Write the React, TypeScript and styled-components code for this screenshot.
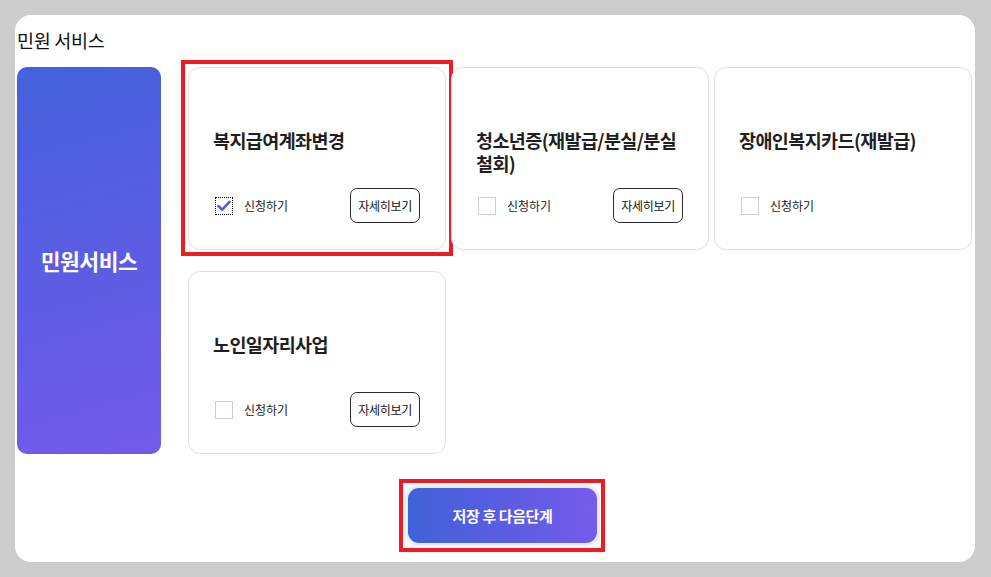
import styled, { createGlobalStyle } from 'styled-components';

interface Service {
  title: string;
  checked?: boolean;
  detail?: boolean;
  highlighted?: boolean;
}

const services: Service[] = [
  { title: '복지급여계좌변경', checked: true, detail: true, highlighted: true },
  { title: '청소년증(재발급/분실/분실철회)', detail: true },
  { title: '장애인복지카드(재발급)' },
  { title: '노인일자리사업', detail: true },
];

export default function App(): JSX.Element {
  return (
    <>
      <GlobalStyle />
      <Panel>
        <PageTitle>민원 서비스</PageTitle>
        <Body>
          <SideBox>민원서비스</SideBox>
          <CardGrid>
            {services.map((s) => (
              <Card key={s.title} highlighted={s.highlighted}>
                <CardTitle>{s.title}</CardTitle>
                <CardFooter>
                  <CheckLabel>
                    <CheckBox checked={s.checked}>
                      {s.checked && (
                        <svg width="14" height="12" viewBox="0 0 14 12">
                          <path
                            d="M1.5 6.2 L5.2 9.6 L12.5 1.8"
                            fill="none"
                            stroke="#4b5fe0"
                            strokeWidth="2.6"
                            strokeLinecap="round"
                            strokeLinejoin="round"
                          />
                        </svg>
                      )}
                    </CheckBox>
                    신청하기
                  </CheckLabel>
                  {s.detail && <DetailButton>자세히보기</DetailButton>}
                </CardFooter>
              </Card>
            ))}
          </CardGrid>
        </Body>
        <Footer>
          <NextButton>저장 후 다음단계</NextButton>
        </Footer>
      </Panel>
    </>
  );
}

const GlobalStyle = createGlobalStyle`
  html, body {
    margin: 0;
    background: #cccccc;
  }
  body {
    padding: 15px;
    font-family: "Noto Sans CJK KR", "Noto Sans", sans-serif;
    color: #1d1d1d;
  }
`;
const Panel = styled.div`
  box-sizing: border-box;
  width: 960px;
  height: 547px;
  background: #ffffff;
  border-radius: 16px;
  padding: 13px 3px 0 2px;
`;
const PageTitle = styled.h2`
  margin: 0;
  font-size: 18.5px;
  font-weight: 400;
  line-height: 24px;
  color: #111;
  letter-spacing: -0.3px;
`;
const Body = styled.div`
  display: flex;
  gap: 27px;
  margin-top: 15px;
`;
const SideBox = styled.div`
  flex: 0 0 144px;
  display: flex;
  align-items: center;
  justify-content: center;
  border-radius: 10px;
  background: linear-gradient(165deg, #4461dc 0%, #5b5de3 50%, #745aeb 100%);
  color: #fff;
  font-size: 21.5px;
  font-weight: 700;
  letter-spacing: -0.5px;
`;
const CardGrid = styled.div`
  flex: 1;
  display: grid;
  grid-template-columns: repeat(3, 1fr);
  grid-auto-rows: 183px;
  column-gap: 5px;
  row-gap: 21px;
`;
const Card = styled.div<{ highlighted?: boolean }>`
  position: relative;
  box-sizing: border-box;
  display: flex;
  flex-direction: column;
  padding: 61px 25px 26px 24px;
  border: 1px solid #dedfe3;
  border-radius: 12px;
  background: #fff;

  &::after {
    content: '';
    display: ${({ highlighted }) => (highlighted ? 'block' : 'none')};
    position: absolute;
    inset: -8px -8px -7px -8px;
    border: 4px solid #ed1c24;
  }
`;
const CardTitle = styled.h3`
  margin: 0;
  font-size: 18.5px;
  font-weight: 700;
  line-height: 23px;
  color: #1f1f1f;
  letter-spacing: -0.6px;
  word-break: break-all;
`;
const CardFooter = styled.div`
  margin-top: auto;
  min-height: 35px;
  display: flex;
  align-items: center;
  justify-content: space-between;
`;
const CheckLabel = styled.label`
  display: flex;
  align-items: center;
  gap: 11px;
  font-size: 12px;
  color: #222;
  padding-left: 2px;
`;
const CheckBox = styled.span<{ checked?: boolean }>`
  box-sizing: border-box;
  width: 18px;
  height: 18px;
  display: flex;
  align-items: center;
  justify-content: center;
  border: ${({ checked }) => (checked ? '1px dotted #000' : '1px solid #c9cedd')};
  background: #fff;
`;
const DetailButton = styled.button`
  box-sizing: border-box;
  height: 35px;
  padding: 0 7px;
  border: 1px solid #2a2a2a;
  border-radius: 7px;
  background: #fff;
  font-family: inherit;
  font-size: 12px;
  color: #111;
  letter-spacing: -0.3px;
`;
const Footer = styled.div`
  display: flex;
  justify-content: center;
  padding: 34px 0 0 16px;
`;
const NextButton = styled.button`
  position: relative;
  width: 189px;
  height: 55px;
  border: none;
  border-radius: 11px;
  background: linear-gradient(90deg, #3f62d8 0%, #5a5de2 50%, #765bec 100%);
  box-shadow: 0 0 0 3px #ecebf8, 0 4px 14px rgba(90, 90, 170, 0.12);
  color: #fff;
  font-family: inherit;
  font-size: 15px;
  font-weight: 700;
  letter-spacing: -0.4px;

  &::after {
    content: '';
    position: absolute;
    inset: -9px -8px -9px -9px;
    border: 4px solid #ed1c24;
  }
`;
